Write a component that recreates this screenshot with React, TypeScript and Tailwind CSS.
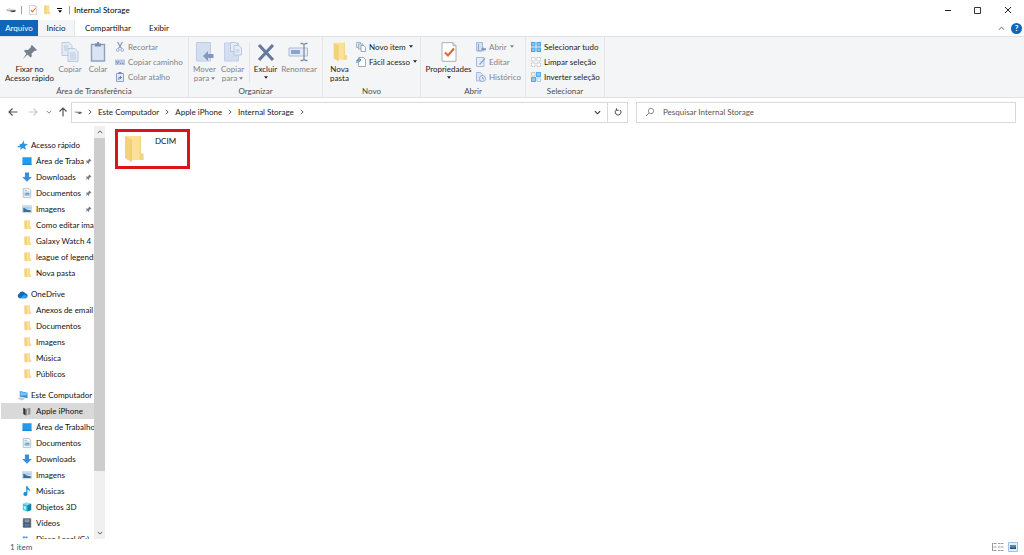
import React, { useState } from 'react';
import clsx from 'clsx';

type IconProps = { className?: string };

const FolderIcon: React.FC<IconProps> = ({ className }) => (
  <svg viewBox="0 0 20 28" preserveAspectRatio="none" className={className} aria-hidden="true">
    <path d="M2 1h15v17l2.500 1v6H3z" fill="#fbe197" />
    <path d="M15.500 1H17v17l2.500 1v6h-4z" fill="#f3d682" />
    <path d="M1 1l6.500 3.500V27L1 23z" fill="#f3d27a" />
    <path d="M6.800 4.200l.7.300V27l-.7-.4z" fill="#e6c265" />
  </svg>
);

const PinIcon: React.FC<IconProps> = ({ className }) => (
  <svg viewBox="0 0 16 16" className={className} aria-hidden="true">
    <path d="M10 1l5 5-1.500 1-1-.3-3 3 .3 2.600-1.400 1.200-2.900-2.900L1 15l3.400-5.600L2 7l1.300-1.300 2.700.3 3-3L8.800 2z" fill="#76818d" />
  </svg>
);

const DriveIcon: React.FC<IconProps> = ({ className }) => (
  <svg viewBox="0 0 20 10" className={className} aria-hidden="true">
    <path d="M1 4l6-2 12 3v2l-6 2.500L1 6.500z" fill="#a9acb0" />
    <path d="M1 4l6-2 12 3-6 2z" fill="#dcdee0" />
    <path d="M8 6.500l11-1v2.500l-6 1.500z" fill="#3b3d40" />
  </svg>
);

const CheckPageIcon: React.FC<IconProps> = ({ className }) => (
  <svg viewBox="0 0 16 20" className={className} aria-hidden="true">
    <path d="M1 .7h11l3 3v15.600H1z" fill="#fff" stroke="#a9adb3" />
    <path d="M12 .7v3h3" fill="none" stroke="#a9adb3" />
    <path d="M4 10.500l3 3 6-7" fill="none" stroke="#dd6a35" strokeWidth="2.200" />
  </svg>
);

const CopyIcon: React.FC<IconProps> = ({ className }) => (
  <svg viewBox="0 0 17 20" className={className} aria-hidden="true">
    <g fill="#e3ebf7" stroke="#b0bfd9" strokeWidth=".8">
      <path d="M.5.5h7l3 3v10H.500z" />
      <path d="M6.500 6.500h7l3 3v10h-10z" />
    </g>
    <path d="M2.500 4h4M2.500 6h4M2.500 8h3M8.500 11h5M8.500 13h6M8.500 15h6M8.500 17h6" stroke="#b0bfd9" strokeWidth=".8" />
  </svg>
);

const PasteIcon: React.FC<IconProps> = ({ className }) => (
  <svg viewBox="0 0 16 20" className={className} aria-hidden="true">
    <path d="M1.500 2.500h13v16.500h-13z" fill="#d9e4f5" stroke="#8fa0be" strokeWidth="1.400" />
    <path d="M5 1.500h6v3H5z" fill="#7d8ca8" />
    <path d="M7 0h2v2H7z" fill="#7d8ca8" />
  </svg>
);

const CutIcon: React.FC<IconProps> = ({ className }) => (
  <svg viewBox="0 0 10 10" className={className} aria-hidden="true">
    <path d="M2.500 0l4 6.500M7.500 0l-4 6.500" stroke="#8597b5" strokeWidth="1.200" />
    <circle cx="2.800" cy="8" r="1.400" fill="none" stroke="#9fb4d8" />
    <circle cx="7.200" cy="8" r="1.400" fill="none" stroke="#9fb4d8" />
  </svg>
);

const PathIcon: React.FC<IconProps> = ({ className }) => (
  <svg viewBox="0 0 10 10" className={className} aria-hidden="true">
    <path d="M0 2.500h10v5.500H0z" fill="#b8c8e4" />
    <path d="M1 4l1.500 2.500L4 4M5 6.500h1M7 6.500h1.500" stroke="#6f86ad" fill="none" strokeWidth=".8" />
  </svg>
);

const ShortcutIcon: React.FC<IconProps> = ({ className }) => (
  <svg viewBox="0 0 10 10" className={className} aria-hidden="true">
    <path d="M1.500 1.500h7v8h-7z" fill="#e2eaf7" stroke="#8fa3c6" />
    <path d="M3.500 0h3v2h-3z" fill="#7d8ca8" />
    <path d="M3.800 8V5.500h2.500M5 4l1.500 1.500L5 7" fill="none" stroke="#5c79b0" strokeWidth=".9" />
  </svg>
);

const MoveIcon: React.FC<IconProps> = ({ className }) => (
  <svg viewBox="0 0 18 20" className={className} aria-hidden="true">
    <path d="M.5.5h14v18.500H.500z" fill="#d3dff1" stroke="#bccbe4" />
    <path d="M7 14l5-5v3h5.500v4H12v3z" fill="#8298c0" />
  </svg>
);

const CopyToIcon: React.FC<IconProps> = ({ className }) => (
  <svg viewBox="0 0 18 20" className={className} aria-hidden="true">
    <path d="M.5 1h14v18H.500z" fill="#d3dff1" stroke="#c2d0e7" />
    <g fill="#e8eef8" stroke="#aebfdb" strokeWidth=".8">
      <path d="M6.500.5h5l2 2v7h-7z" />
      <path d="M10 3.500h5l2.500 2.500v7H10z" />
    </g>
    <path d="M11.500 8h4M11.500 10h4" stroke="#aebfdb" strokeWidth=".8" />
  </svg>
);

const DeleteIcon: React.FC<IconProps> = ({ className }) => (
  <svg viewBox="0 0 18 20" className={className} aria-hidden="true">
    <path d="M2 3l14 15M16 3L2 18" stroke="#67799d" strokeWidth="3.200" />
  </svg>
);

const RenameIcon: React.FC<IconProps> = ({ className }) => (
  <svg viewBox="0 0 22 20" className={className} aria-hidden="true">
    <path d="M1 6h18.500v8H1z" fill="#e5ecf8" stroke="#a9bad8" />
    <path d="M3 8h9v4H3z" fill="#8ba3cf" />
    <path d="M12.500 1.500h2l1.500 1 1.500-1h2M16 2.500v15M12.500 18.500h2l1.500-1 1.500 1h2" fill="none" stroke="#7f90ad" strokeWidth="1.300" />
  </svg>
);

const NewItemIcon: React.FC<IconProps> = ({ className }) => (
  <svg viewBox="0 0 10 10" className={className} aria-hidden="true">
    <path d="M.5.500h4v5h-4z" fill="#dcebf7" stroke="#8fa8bd" strokeWidth=".8" />
    <path d="M2.500 2h4.500v5H2.500z" fill="#cfe5f5" stroke="#8fa8bd" strokeWidth=".8" />
    <path d="M5 3.500h2.800l1.700 2v4H5z" fill="#fff" stroke="#8c959e" strokeWidth=".8" />
  </svg>
);

const EasyAccessIcon: React.FC<IconProps> = ({ className }) => (
  <svg viewBox="0 0 10 10" className={className} aria-hidden="true">
    <path d="M2.500.5h5l2 2v7h-7z" fill="#fff" stroke="#8b97a3" strokeWidth=".8" />
    <path d="M1 6V3h3.500M3 1.200L4.800 3 3 4.800" fill="none" stroke="#2d7fc1" />
  </svg>
);

const OpenIcon: React.FC<IconProps> = ({ className }) => (
  <svg viewBox="0 0 10 10" className={className} aria-hidden="true">
    <path d="M.5.5h6v8.500h-6z" fill="#d5e0f2" stroke="#a7b9d9" />
    <path d="M2.500 2v7h3" fill="none" stroke="#8ea5cf" />
    <path d="M5 7l2.500-2v1.200H10v2H7.500V9.500z" fill="#7b94c4" />
  </svg>
);

const EditIcon: React.FC<IconProps> = ({ className }) => (
  <svg viewBox="0 0 10 10" className={className} aria-hidden="true">
    <path d="M.5.5h7.500v9H.500z" fill="#e6edf9" stroke="#a7b9d9" />
    <path d="M3.500 7.500l5.500-6" stroke="#8ea5cf" strokeWidth="1.300" />
  </svg>
);

const HistoryIcon: React.FC<IconProps> = ({ className }) => (
  <svg viewBox="0 0 10 10" className={className} aria-hidden="true">
    <path d="M.5.5h4l2 2V9h-6z" fill="#dbe5f5" stroke="#a7b9d9" />
    <circle cx="6.500" cy="6.500" r="3" fill="#e6edf9" stroke="#8ea5cf" />
    <path d="M6.500 5v1.700H8" fill="none" stroke="#7b94c4" strokeWidth=".8" />
  </svg>
);

const SelectAllIcon: React.FC<IconProps> = ({ className }) => (
  <svg viewBox="0 0 10 10" className={className} aria-hidden="true">
    <path d="M0 0h4.500v4.500H0zM5.500 0H10v4.500H5.500zM0 5.500h4.500V10H0zM5.500 5.500H10V10H5.500z" fill="#47a5e6" />
    <path d="M1 1h2.500v2.500H1zM6.500 1H9v2.500H6.500zM1 6.500h2.500V9H1zM6.500 6.500H9V9H6.500z" fill="#84c6f2" />
  </svg>
);

const SelectNoneIcon: React.FC<IconProps> = ({ className }) => (
  <svg viewBox="0 0 10 10" className={className} aria-hidden="true">
    <path d="M.5.500H4V4H.500zM6 .500h3.500V4H6zM.5 6H4v3.500H.500zM6 6h3.500v3.500H6z" fill="#fff" stroke="#a9adb2" strokeWidth=".7" strokeDasharray="1.200 .6" />
  </svg>
);

const InvertIcon: React.FC<IconProps> = ({ className }) => (
  <svg viewBox="0 0 10 10" className={className} aria-hidden="true">
    <path d="M.5.500H4V4H.500zM6 6h3.500v3.500H6z" fill="#eef6fc" stroke="#9fbdd4" strokeWidth=".7" />
    <path d="M5 0h5v5H5zM0 5h5v5H0z" fill="#57adea" />
    <path d="M6 1h3v3H6zM1 6h3v3H1z" fill="#8ccaf4" />
  </svg>
);

const StarIcon: React.FC<IconProps> = ({ className }) => (
  <svg viewBox="0 0 12 12" className={className} aria-hidden="true">
    <path d="M7 .5l1 3.500 3.800.3-3 2.400.9 4L6.300 8.600 3.500 11l.6-3H.500V6.800l3-.8-1-1.500L5.400 4z" fill="#2f93dd" />
  </svg>
);

const DesktopIcon: React.FC<IconProps> = ({ className }) => (
  <svg viewBox="0 0 12 12" className={className} aria-hidden="true">
    <path d="M.5 1.500h11v9H.500z" fill="#1f9bf0" />
    <path d="M.5 9.500h11v1H.500z" fill="#0b76c9" />
  </svg>
);

const DownloadIcon: React.FC<IconProps> = ({ className }) => (
  <svg viewBox="0 0 12 12" className={className} aria-hidden="true">
    <path d="M3.500.500h5V6h3.300L6 11.800.2 6h3.300z" fill="#3a8edb" />
  </svg>
);

const DocumentIcon: React.FC<IconProps> = ({ className }) => (
  <svg viewBox="0 0 12 12" className={className} aria-hidden="true">
    <path d="M1.500.500h7l2 2v9h-9z" fill="#eef4f9" stroke="#9cabb8" strokeWidth=".8" />
    <path d="M3 3h3M3 5h6M3 9h6" stroke="#8fb4d2" strokeWidth=".9" />
    <path d="M6 6h3v2H3V6.500z" fill="#63a0cf" />
  </svg>
);

const PictureIcon: React.FC<IconProps> = ({ className }) => (
  <svg viewBox="0 0 12 12" className={className} aria-hidden="true">
    <path d="M.5 2h11v8.500H.500z" fill="#e9f1f7" stroke="#b4bfc8" strokeWidth=".7" />
    <path d="M1.500 3h9v3.500h-9z" fill="#a9d0ee" />
    <path d="M1.500 4.500c2 0 3 2 5 2.500s3 0 4 .5v2h-9z" fill="#3c6f98" />
  </svg>
);

const CloudIcon: React.FC<IconProps> = ({ className }) => (
  <svg viewBox="0 0 12 12" className={className} aria-hidden="true">
    <path d="M3 10a2.600 2.600 0 0 1-.5-5A3.600 3.600 0 0 1 9 4.500 2.800 2.800 0 0 1 9.500 10z" fill="#0f6cbd" />
    <path d="M3 10l5-4 3.500 2A2.500 2.500 0 0 1 9.500 10z" fill="#2f9fe8" />
  </svg>
);

const ComputerIcon: React.FC<IconProps> = ({ className }) => (
  <svg viewBox="0 0 12 12" className={className} aria-hidden="true">
    <path d="M3 1l8.500 2v6L3 7z" fill="#2f97e0" />
    <path d="M3.800 2l7 1.700v2L3.800 6z" fill="#7cc4f3" />
    <path d="M.5 9l4-1.500L9 9.500 5 11.500z" fill="#c3cbd2" />
  </svg>
);

const PhoneIcon: React.FC<IconProps> = ({ className }) => (
  <svg viewBox="0 0 12 12" className={className} aria-hidden="true">
    <path d="M1.500 2l3 1.500v8l-3-2z" fill="#303234" />
    <path d="M4.500 3.500L10 2v8l-5.500 1.500z" fill="#8b8f93" />
    <path d="M6 4.200l1.500-.4v6.500L6 10.700z" fill="#c4c7ca" />
  </svg>
);

const MusicIcon: React.FC<IconProps> = ({ className }) => (
  <svg viewBox="0 0 12 12" className={className} aria-hidden="true">
    <path d="M5 0h1.300c.5 2.500 4.200 3 3.200 7-.3-1.500-1.600-2.500-3-2.800V9.300A2.400 2.400 0 1 1 5 7.300z" fill="#1a8fdb" />
  </svg>
);

const CubeIcon: React.FC<IconProps> = ({ className }) => (
  <svg viewBox="0 0 12 12" className={className} aria-hidden="true">
    <path d="M1 2.500L5 .500l6 1.500v7.500l-4.500 2-5.500-2z" fill="#2fc0da" />
    <path d="M1 2.500L5 .500l6 1.500-4.500 2z" fill="#8be3f0" />
    <path d="M6.500 4L11 2v7.500l-4.500 2z" fill="#1482a8" />
    <path d="M2 4.500l3 1v4l-3-1z" fill="#b5eff7" />
  </svg>
);

const VideoIcon: React.FC<IconProps> = ({ className }) => (
  <svg viewBox="0 0 12 12" className={className} aria-hidden="true">
    <path d="M1 .500h10v11H1z" fill="#3d4248" />
    <path d="M3 1.500h6v4H3z" fill="#8296ad" />
    <path d="M3 6.500h6v4H3z" fill="#5379a8" />
    <path d="M2 1v10.500M10 1v10.500" stroke="#d8dadc" strokeWidth=".8" strokeDasharray="1 1" />
  </svg>
);

const DiskIcon: React.FC<IconProps> = ({ className }) => (
  <svg viewBox="0 0 12 12" className={className} aria-hidden="true">
    <path d="M1 3h2.500v2H1zM4 3h2.500v2H4z" fill="#24a5dd" />
    <path d="M1 6h10v4H1z" fill="#9aa0a6" />
  </svg>
);

const Chevron: React.FC<IconProps> = ({ className }) => (
  <svg viewBox="0 0 8 8" className={className} aria-hidden="true">
    <path d="M1 2.500l3 3 3-3" fill="none" stroke="currentColor" strokeWidth="1.300" />
  </svg>
);

const Caret: React.FC<IconProps> = ({ className }) => (
  <svg viewBox="0 0 6 4" className={clsx('h-[3px] w-1 shrink-0', className)} aria-hidden="true">
    <path d="M0 0h6L3 4z" fill="currentColor" />
  </svg>
);

interface BigButtonProps {
  icon: React.FC<IconProps>;
  lines: string[];
  caret?: 'inline' | 'below';
  muted?: boolean;
  iconClass?: string;
  className?: string;
}

const BigButton: React.FC<BigButtonProps> = ({ icon: Icon, lines, caret, muted, iconClass, className }) => (
  <button type="button" className={clsx('flex shrink-0 flex-col items-center pt-[3px]', muted ? 'text-[#808286]' : 'text-[#222]', className)}>
    <span className="mb-[3px] flex h-5 items-center">
      <Icon className={iconClass ?? 'h-5 w-[18px]'} />
    </span>
    {lines.map((line, i) => (
      <span key={line} className="flex items-center gap-[2px] leading-[9px] whitespace-nowrap">
        {line}
        {caret === 'inline' && i === lines.length - 1 && <Caret />}
      </span>
    ))}
    {caret === 'below' && <Caret className="mt-[2px]" />}
  </button>
);

interface SmallButtonProps {
  icon: React.FC<IconProps>;
  label: string;
  caret?: boolean;
  muted?: boolean;
}

const SmallButton: React.FC<SmallButtonProps> = ({ icon: Icon, label, caret, muted }) => (
  <button type="button" className={clsx('flex h-[15px] items-center gap-[3px] whitespace-nowrap', muted ? 'text-[#808286]' : 'text-[#222]')}>
    <Icon className="size-[10px] shrink-0" />
    {label}
    {caret && <Caret />}
  </button>
);

interface GroupProps {
  title: string;
  className: string;
  children: React.ReactNode;
}

const RibbonGroup: React.FC<GroupProps> = ({ title, className, children }) => (
  <section aria-label={title} className={clsx('flex shrink-0 flex-col justify-between border-r border-[#e3e5e8]', className)}>
    <div className="flex items-start pt-[2px]">{children}</div>
    <div className="pb-px text-center leading-[10px] text-[#4a4c4f]">{title}</div>
  </section>
);

interface TreeNode {
  label: string;
  icon: React.FC<IconProps>;
  pinned?: boolean;
}

interface TreeSection extends TreeNode {
  items: TreeNode[];
}

const TREE: TreeSection[] = [
  {
    label: 'Acesso rápido',
    icon: StarIcon,
    items: [
      { label: 'Área de Trabalho', icon: DesktopIcon, pinned: true },
      { label: 'Downloads', icon: DownloadIcon, pinned: true },
      { label: 'Documentos', icon: DocumentIcon, pinned: true },
      { label: 'Imagens', icon: PictureIcon, pinned: true },
      { label: 'Como editar imagens', icon: FolderIcon },
      { label: 'Galaxy Watch 4', icon: FolderIcon },
      { label: 'league of legends', icon: FolderIcon },
      { label: 'Nova pasta', icon: FolderIcon }
    ]
  },
  {
    label: 'OneDrive',
    icon: CloudIcon,
    items: [
      { label: 'Anexos de email', icon: FolderIcon },
      { label: 'Documentos', icon: FolderIcon },
      { label: 'Imagens', icon: FolderIcon },
      { label: 'Música', icon: FolderIcon },
      { label: 'Públicos', icon: FolderIcon }
    ]
  },
  {
    label: 'Este Computador',
    icon: ComputerIcon,
    items: [
      { label: 'Apple iPhone', icon: PhoneIcon },
      { label: 'Área de Trabalho', icon: DesktopIcon },
      { label: 'Documentos', icon: DocumentIcon },
      { label: 'Downloads', icon: DownloadIcon },
      { label: 'Imagens', icon: PictureIcon },
      { label: 'Músicas', icon: MusicIcon },
      { label: 'Objetos 3D', icon: CubeIcon },
      { label: 'Vídeos', icon: VideoIcon },
      { label: 'Disco Local (C:)', icon: DiskIcon }
    ]
  }
];

const CRUMBS = ['Este Computador', 'Apple iPhone', 'Internal Storage'];

const TitleBar = () => (
  <header className="flex h-5 shrink-0 items-center pl-1.5 text-black">
    <DriveIcon className="h-[6px] w-[10px]" />
    <span className="ml-[5px] h-2 w-px bg-[#a0a0a0]" />
    <button type="button" aria-label="Propriedades" className="ml-[7px]">
      <CheckPageIcon className="h-[10px] w-2" />
    </button>
    <button type="button" aria-label="Nova pasta" className="ml-[7px]">
      <FolderIcon className="h-[10px] w-[6px]" />
    </button>
    <button type="button" aria-label="Personalizar" className="mx-[7px] flex flex-col items-center gap-px">
      <span className="h-px w-[5px] bg-black" />
      <Caret />
    </button>
    <span className="h-2 w-px bg-[#a0a0a0]" />
    <h1 className="ml-1 leading-3">Internal Storage</h1>
    <div className="ml-auto flex pr-px">
      <button type="button" aria-label="Minimizar" className="flex w-[30px] justify-center">
        <svg viewBox="0 0 8 8" className="size-2"><path d="M1 4.500h6" stroke="#222" /></svg>
      </button>
      <button type="button" aria-label="Maximizar" className="flex w-[30px] justify-center">
        <svg viewBox="0 0 8 8" className="size-2"><path d="M.5 1.500h6v6h-6z" fill="none" stroke="#333" /></svg>
      </button>
      <button type="button" aria-label="Fechar" className="flex w-[30px] justify-center">
        <svg viewBox="0 0 8 8" className="size-2"><path d="M1 1l6 6M7 1L1 7" stroke="#222" /></svg>
      </button>
    </div>
  </header>
);

const Ribbon = () => (
  <div className="flex h-[62px] shrink-0 overflow-hidden border-y border-[#dfe1e4] bg-[#f4f5f7]">
    <RibbonGroup title="Área de Transferência" className="w-[189px]">
      <BigButton icon={PinIcon} lines={['Fixar no', 'Acesso rápido']} iconClass="size-4" className="w-[59px]" />
      <BigButton icon={CopyIcon} lines={['Copiar']} muted className="w-[22px]" />
      <BigButton icon={PasteIcon} lines={['Colar']} muted className="w-[34px]" />
      <div className="flex flex-col">
        <SmallButton icon={CutIcon} label="Recortar" muted />
        <SmallButton icon={PathIcon} label="Copiar caminho" muted />
        <SmallButton icon={ShortcutIcon} label="Colar atalho" muted />
      </div>
    </RibbonGroup>
    <RibbonGroup title="Organizar" className="w-[134px]">
      <BigButton icon={MoveIcon} lines={['Mover', 'para']} caret="inline" muted className="w-[31px]" />
      <BigButton icon={CopyToIcon} lines={['Copiar', 'para']} caret="inline" muted className="w-[25px]" />
      <span className="mt-1 ml-1 h-10 w-px bg-[#e3e5e8]" />
      <BigButton icon={DeleteIcon} lines={['Excluir']} caret="below" className="w-[31px]" />
      <BigButton icon={RenameIcon} lines={['Renomear']} muted iconClass="h-5 w-[22px]" className="w-[36px]" />
    </RibbonGroup>
    <RibbonGroup title="Novo" className="w-[98px]">
      <BigButton icon={FolderIcon} lines={['Nova', 'pasta']} iconClass="h-5 w-[14px]" className="w-[33px]" />
      <div className="flex flex-col">
        <SmallButton icon={NewItemIcon} label="Novo item" caret />
        <SmallButton icon={EasyAccessIcon} label="Fácil acesso" caret />
      </div>
    </RibbonGroup>
    <RibbonGroup title="Abrir" className="w-[105px]">
      <BigButton icon={CheckPageIcon} lines={['Propriedades']} caret="below" className="w-[55px]" />
      <div className="flex flex-col">
        <SmallButton icon={OpenIcon} label="Abrir" caret muted />
        <SmallButton icon={EditIcon} label="Editar" muted />
        <SmallButton icon={HistoryIcon} label="Histórico" muted />
      </div>
    </RibbonGroup>
    <RibbonGroup title="Selecionar" className="w-[79px]">
      <div className="flex flex-col pl-[5px]">
        <SmallButton icon={SelectAllIcon} label="Selecionar tudo" />
        <SmallButton icon={SelectNoneIcon} label="Limpar seleção" />
        <SmallButton icon={InvertIcon} label="Inverter seleção" />
      </div>
    </RibbonGroup>
  </div>
);

const AddressRow = () => {
  const [query, setQuery] = useState('');

  return (
    <div className="flex h-7 shrink-0 items-center pr-2 pl-2 text-[#333]">
      <button type="button" aria-label="Voltar">
        <svg viewBox="0 0 10 10" className="size-[10px]"><path d="M9.500 5H1M4.500 1.500L1 5l3.500 3.500" fill="none" stroke="#555" strokeWidth="1.200" /></svg>
      </button>
      <button type="button" aria-label="Avançar" className="ml-[10px]">
        <svg viewBox="0 0 10 10" className="size-[10px]"><path d="M.5 5H9M5.500 1.500L9 5 5.500 8.500" fill="none" stroke="#ccc" strokeWidth="1.200" /></svg>
      </button>
      <button type="button" aria-label="Locais recentes" className="ml-2">
        <Chevron className="size-[6px] text-[#888]" />
      </button>
      <button type="button" aria-label="Acima" className="ml-1.5">
        <svg viewBox="0 0 10 10" className="size-[10px]"><path d="M5 9.500V1M1.500 4.500L5 1l3.500 3.500" fill="none" stroke="#555" strokeWidth="1.200" /></svg>
      </button>
      <div className="ml-[3px] flex h-[21px] grow-[3] basis-0 items-center border border-[#d9d9d9] bg-white">
        <nav aria-label="Caminho" className="flex grow items-center">
          <DriveIcon className="ml-0.5 h-[6px] w-2" />
          {CRUMBS.map((crumb) => (
            <React.Fragment key={crumb}>
              <Chevron className="mx-[5px] size-[6px] -rotate-90 text-[#555]" />
              <a href="#" className="leading-3 whitespace-nowrap text-[#222]">{crumb}</a>
            </React.Fragment>
          ))}
          <Chevron className="mx-[5px] size-[6px] -rotate-90 text-[#555]" />
        </nav>
        <button type="button" aria-label="Locais anteriores" className="px-1.5">
          <Chevron className="size-[7px]" />
        </button>
        <button type="button" aria-label="Atualizar" className="flex h-full w-5 items-center justify-center border-l border-[#d9d9d9]">
          <svg viewBox="0 0 10 10" className="size-2"><path d="M7.500 2.500A3.600 3.600 0 1 1 3 2.300M3 .3v2.500h2.800" fill="none" stroke="#444" strokeWidth="1.200" /></svg>
        </button>
      </div>
      <label className="ml-2 flex h-[21px] grow-[2] basis-0 items-center border border-[#d9d9d9] bg-white pl-2">
        <svg viewBox="0 0 10 10" className="size-[10px] shrink-0"><path d="M1 9l3-3" stroke="#888" /><circle cx="6" cy="4" r="2.700" fill="none" stroke="#888" strokeWidth=".9" /></svg>
        <input
          type="text"
          aria-label="Pesquisar"
          value={query}
          onChange={(e) => setQuery(e.target.value)}
          placeholder="Pesquisar Internal Storage"
          className="w-full pl-2 outline-none placeholder:text-[#555]"
        />
      </label>
    </div>
  );
};

const Sidebar = () => {
  const [selected, setSelected] = useState('Este Computador/Apple iPhone');

  return (
    <aside className="flex w-[105px] shrink-0">
      <div className="flex min-w-0 grow flex-col gap-[5px] overflow-hidden pt-[11px] pl-px">
        {TREE.map(({ label, icon: SectionIcon, items }) => (
          <section key={label} aria-label={label} className="shrink-0">
            <button type="button" className="flex h-4 w-full items-center gap-[3px] pl-4 whitespace-nowrap">
              <SectionIcon className="size-[11px] shrink-0" />
              {label}
            </button>
            <ul>
              {items.map(({ label: name, icon: Icon, pinned }) => (
                <li key={name}>
                  <button
                    type="button"
                    onClick={() => setSelected(`${label}/${name}`)}
                    className={clsx('flex h-4 w-full items-center pl-[21px] text-left', selected === `${label}/${name}` && 'bg-[#d9d9d9]')}
                  >
                    <span className="mr-1 flex w-[10px] shrink-0 justify-center">
                      <Icon className={Icon === FolderIcon ? 'h-[10px] w-[7px]' : 'size-[10px]'} />
                    </span>
                    <span className="grow overflow-hidden whitespace-nowrap">{name}</span>
                    {pinned && <PinIcon className="mr-[2px] ml-px size-[7px] shrink-0" />}
                  </button>
                </li>
              ))}
            </ul>
          </section>
        ))}
      </div>
      <div className="flex w-[11px] shrink-0 flex-col items-center bg-[#f0f0f0] text-[#555]">
        <Chevron className="my-[3px] size-[6px] rotate-180" />
        <div className="w-full grow-[6] bg-[#cdcdcd]" />
        <div className="grow" />
        <Chevron className="my-[3px] size-[6px]" />
      </div>
    </aside>
  );
};

const App = () => (
  <div className="flex h-screen flex-col overflow-hidden bg-white font-['Lato',sans-serif] text-[8px] text-[#111]">
    <TitleBar />
    <div className="flex h-4 shrink-0 items-stretch">
      <button type="button" className="w-[38px] bg-[#0f66b8] text-white">Arquivo</button>
      <button type="button" className="w-[37px] border-r border-[#e3e5e8] bg-[#f4f5f7]">Início</button>
      <button type="button" className="w-[66px]">Compartilhar</button>
      <button type="button" className="w-9">Exibir</button>
      <div className="ml-auto flex items-center gap-1.5 pr-0.5">
        <button type="button" aria-label="Minimizar a faixa de opções">
          <Chevron className="size-[7px] rotate-180 text-[#999]" />
        </button>
        <button type="button" aria-label="Ajuda" className="flex size-[11px] items-center justify-center rounded-full bg-[#0f66b8] font-bold text-white">
          ?
        </button>
      </div>
    </div>
    <Ribbon />
    <AddressRow />
    <div className="flex min-h-0 grow">
      <Sidebar />
      <main className="grow pt-[3px] pl-[10px]">
        <button type="button" className="flex h-10 w-[75px] items-start border-[3px] border-[#d9141b] pt-[3px] pl-1.5">
          <FolderIcon className="h-7 w-5" />
          <span className="ml-[11px] leading-3">DCIM</span>
        </button>
      </main>
    </div>
    <footer className="flex h-4 shrink-0 items-center pr-1.5 pl-[10px] text-[#44546a]">
      1 item
      <div className="ml-auto flex gap-1">
        <button type="button" aria-label="Detalhes">
          <svg viewBox="0 0 12 10" className="h-[10px] w-3"><path d="M.5 1v8M1.500 1.500h3M1.500 5h3M1.500 8.500h3M6 1.500h2.500M9 1.500h2.500M6 5h2.500M9 5h2.500M6 8.500h2.500M9 8.500h2.500" stroke="#999" /></svg>
        </button>
        <button type="button" aria-label="Ícones grandes">
          <svg viewBox="0 0 10 10" className="size-[10px]"><path d="M.5.500h9v9h-9z" fill="#e3eef7" stroke="#9fc3df" /><path d="M2 3h6v4H2z" fill="#4b8abb" /><path d="M2 5l3 1 3-1v2H2z" fill="#1f4f7a" /></svg>
        </button>
      </div>
    </footer>
  </div>
);

export default App;
